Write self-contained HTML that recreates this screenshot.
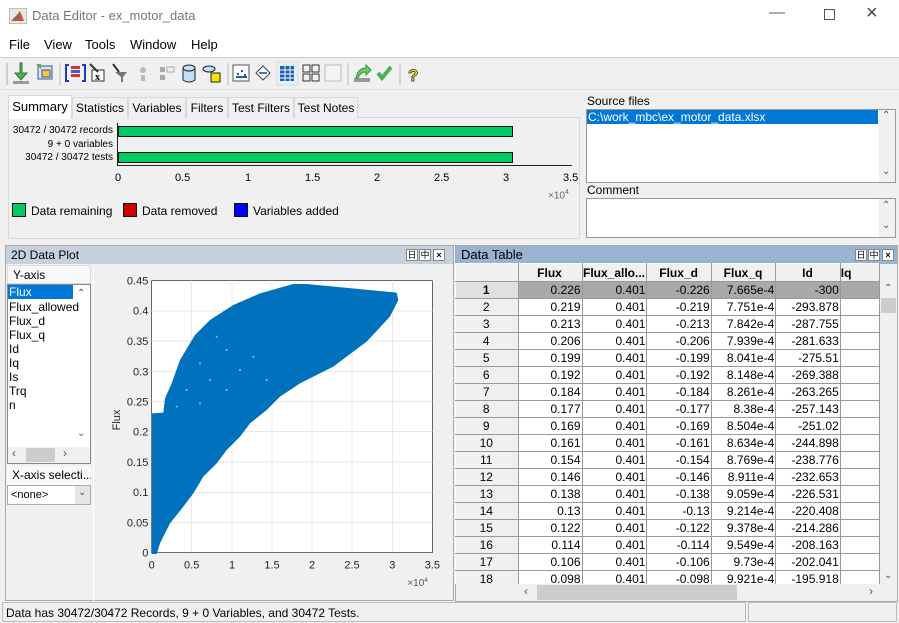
<!DOCTYPE html>
<html><head><meta charset="utf-8"><style>
*{box-sizing:border-box;margin:0;padding:0}
body{width:899px;height:623px;background:#f0f0f0;font-family:"Liberation Sans",Arial,sans-serif;font-size:12px;color:#000;position:relative;overflow:hidden}
.a{position:absolute}
.t{position:absolute;white-space:nowrap}
.tab{position:absolute;top:97px;height:21px;border:1px solid #d9d9d9;border-bottom:none;background:#f0f0f0;padding:3px 0 0;font-size:12px;white-space:nowrap;text-align:center;overflow:hidden}
.hdr{position:absolute;height:18px;font-size:12px;padding:2px 5px}
.btn{position:absolute;top:249px;width:12px;height:12px;border:1px solid #888;background:#fff;font-size:9px;line-height:10px;text-align:center}
table{border-collapse:collapse;position:absolute;left:455px;top:263px;font-size:12px}
td{height:17px;border:1px solid #999;text-align:right;padding:0 1px 0 0;background:#fff;white-space:nowrap;overflow:hidden}
td.r{background:#f0f0f0;text-align:center;border-color:#fff #999 #999 #fff}
tr.h td{background:#f0f0f0;text-align:center;font-weight:bold;height:18px;border-color:#fff #999 #999 #fff}
tr.s td{background:#a9a9a9}
tr.s td.r{background:#e0e0e0}
</style></head><body>
<!-- title bar -->
<div class="a" style="left:0;top:0;width:899px;height:33px;background:#fff"></div>
<svg class="a" style="left:9px;top:8px" width="18" height="16"><rect x="0" y="0" width="18" height="16" fill="#e8e8e8" stroke="#999"/><path d="M2 13 L8 7 L11 3 L15 13 Z" fill="#d9541b"/><path d="M4 11 L9 6 L11 9 Z" fill="#2a7bbf"/></svg>
<div class="t" style="left:32px;top:8px;font-size:13px;color:#777">Data Editor - ex_motor_data</div>
<div class="t" style="left:769px;top:4px;font-size:16px;color:#666">&#8212;</div>
<div class="a" style="left:824px;top:9px;width:11px;height:11px;border:1px solid #555"></div>
<div class="t" style="left:866px;top:2px;font-size:20px;color:#444;font-weight:300">&#215;</div>
<!-- menu -->
<div class="a" style="left:0;top:33px;width:899px;height:24px;background:#fff"></div>
<div class="t" style="left:9px;top:37px;font-size:13px">File</div>
<div class="t" style="left:44px;top:37px;font-size:13px">View</div>
<div class="t" style="left:85px;top:37px;font-size:13px">Tools</div>
<div class="t" style="left:130px;top:37px;font-size:13px">Window</div>
<div class="t" style="left:191px;top:37px;font-size:13px">Help</div>
<div class="a" style="left:0;top:57px;width:899px;height:1px;background:#ccc"></div>
<!-- toolbar -->
<svg class="a" style="left:0;top:58px" width="440" height="32">
<line x1="7" y1="5" x2="7" y2="27" stroke="#aaa"/>
<path d="M20 5 v10 h-5 l6 7 l6 -7 h-5 v-10z" fill="#4caf50" stroke="#2e7d32"/><rect x="13" y="23" width="16" height="3" fill="#999"/>
<rect x="38" y="8" width="14" height="13" fill="#cfe3f7" stroke="#2a5c9a"/><rect x="42" y="12" width="8" height="7" fill="#f4c542" stroke="#555"/><path d="M36 6 l5 0 l0 5z" fill="#4caf50"/>
<line x1="60" y1="5" x2="60" y2="27" stroke="#bbb"/>
<path d="M69 7 h-3 v16 h3 M82 7 h3 v16 h-3" stroke="#1a3fb4" stroke-width="2" fill="none"/><rect x="71" y="8" width="9" height="3" fill="#d33"/><rect x="71" y="12" width="9" height="3" fill="#36c"/><rect x="71" y="16" width="9" height="3" fill="#d33"/>
<rect x="92" y="12" width="12" height="11" fill="#fff" stroke="#333"/><text x="95" y="22" font-size="10" font-weight="bold" font-family="Liberation Serif">x</text><path d="M90 6 l8 8" stroke="#333" stroke-width="2"/>
<path d="M115 14 h12 l-4 5 v5 h-2 v-5z" fill="#777"/><path d="M113 6 l6 8" stroke="#333" stroke-width="2"/>
<circle cx="143" cy="12" r="3" fill="#bbb"/><rect x="141" y="17" width="4" height="6" fill="#bbb"/>
<rect x="160" y="9" width="5" height="5" fill="#aaa"/><rect x="167" y="9" width="7" height="5" fill="none" stroke="#aaa"/><rect x="160" y="17" width="5" height="5" fill="#aaa"/>
<path d="M183 10 v12 q6 4 12 0 v-12" fill="#bfe0f5" stroke="#222"/><ellipse cx="189" cy="10" rx="6" ry="3" fill="#bfe0f5" stroke="#222"/>
<ellipse cx="209" cy="11" rx="6" ry="3" fill="#bfe0f5" stroke="#222"/><rect x="211" y="15" width="9" height="9" fill="#f5e400" stroke="#222"/>
<line x1="228" y1="5" x2="228" y2="27" stroke="#bbb"/>
<rect x="233" y="7" width="16" height="16" fill="#fff" stroke="#555"/><path d="M236 19h11M237 16h2M241 13h2M244 17h2" stroke="#1a5fb4" stroke-width="2"/>
<path d="M256 15 l7 -7 l7 7 l-7 7z" fill="#fff" stroke="#444"/><path d="M259 15h8" stroke="#3a7bd5" stroke-width="2"/>
<rect x="277" y="4" width="21" height="23" fill="#e8f0fb" stroke="#cfd8e6"/><rect x="280" y="8" width="14" height="15" fill="#1a5fb4"/><path d="M280 12h14M280 16h14M280 20h14M285 8v15M290 8v15" stroke="#fff"/>
<rect x="303" y="7" width="7" height="7" fill="none" stroke="#333"/><rect x="312" y="7" width="7" height="7" fill="none" stroke="#333"/><rect x="303" y="16" width="7" height="7" fill="none" stroke="#333"/><rect x="312" y="16" width="7" height="7" fill="none" stroke="#333"/>
<rect x="325" y="7" width="16" height="16" fill="#f4f4f4" stroke="#bbb"/>
<line x1="348" y1="5" x2="348" y2="27" stroke="#bbb"/>
<rect x="354" y="20" width="16" height="4" fill="#999"/><path d="M356 20 q2 -10 10 -10 v-3 l5 5 l-5 5 v-3 q-6 0 -8 6z" fill="#6c6" stroke="#393"/>
<path d="M378 15 l4 5 l9 -11" stroke="#4caf50" stroke-width="4" fill="none"/>
<line x1="400" y1="5" x2="400" y2="27" stroke="#bbb"/>
<text x="408" y="23" font-size="17" font-weight="bold" fill="#f5e400" stroke="#222" stroke-width="0.7">?</text>
</svg>
<div class="a" style="left:0;top:89px;width:899px;height:1px;background:#ddd"></div>
<!-- summary tabs -->
<div class="a" style="left:8px;top:117px;width:572px;height:122px;border:1px solid #d9d9d9;background:#f0f0f0"></div>
<div class="tab" style="left:72px;width:56px">Statistics</div>
<div class="tab" style="left:128px;width:58px">Variables</div>
<div class="tab" style="left:186px;width:42px">Filters</div>
<div class="tab" style="left:228px;width:66px">Test Filters</div>
<div class="tab" style="left:294px;width:64px">Test Notes</div>
<div class="tab" style="left:8px;top:95px;width:64px;height:24px;background:#fff;font-size:13px;padding-top:3px">Summary</div>
<div class="t" style="right:786px;top:125px;font-size:10px">30472 / 30472 records</div>
<div class="t" style="right:786px;top:139px;font-size:10px">9 + 0 variables</div>
<div class="t" style="right:786px;top:152px;font-size:10px">30472 / 30472 tests</div>
<div class="a" style="left:117px;top:123px;width:1px;height:43px;background:#222"></div>
<div class="a" style="left:117px;top:165px;width:455px;height:1px;background:#222"></div>
<div class="a" style="left:118px;top:126px;width:395px;height:11px;background:#00cc66;border:1px solid #111"></div>
<div class="a" style="left:118px;top:152px;width:395px;height:11px;background:#00cc66;border:1px solid #111"></div>
<div class="t" style="left:115px;top:172px;font-size:11px">0</div>
<div class="t" style="left:175px;top:172px;font-size:11px">0.5</div>
<div class="t" style="left:245px;top:172px;font-size:11px">1</div>
<div class="t" style="left:305px;top:172px;font-size:11px">1.5</div>
<div class="t" style="left:374px;top:172px;font-size:11px">2</div>
<div class="t" style="left:434px;top:172px;font-size:11px">2.5</div>
<div class="t" style="left:503px;top:172px;font-size:11px">3</div>
<div class="t" style="left:563px;top:172px;font-size:11px">3.5</div>
<div class="t" style="left:548px;top:189px;font-size:10px;color:#666">×10<sup style="font-size:7px">4</sup></div>
<div class="a" style="left:12px;top:203px;width:14px;height:14px;background:#00cc66;border:1px solid #111"></div>
<div class="t" style="left:31px;top:204px">Data remaining</div>
<div class="a" style="left:123px;top:203px;width:14px;height:14px;background:#cc0000;border:1px solid #111"></div>
<div class="t" style="left:142px;top:204px">Data removed</div>
<div class="a" style="left:234px;top:203px;width:14px;height:14px;background:#0000ff;border:1px solid #111"></div>
<div class="t" style="left:253px;top:204px">Variables added</div>
<!-- source files -->
<div class="t" style="left:587px;top:94px">Source files</div>
<div class="a" style="left:586px;top:109px;width:310px;height:74px;border:1px solid #999;background:#fff"></div>
<div class="a" style="left:587px;top:110px;width:291px;height:14px;background:#0078d7"></div>
<div class="t" style="left:588px;top:110px;color:#fff">C:\work_mbc\ex_motor_data.xlsx</div>
<div class="a" style="left:879px;top:110px;width:16px;height:72px;background:#f0f0f0"></div>
<div class="t" style="left:882px;top:110px;font-size:10px;color:#555">&#8963;</div>
<div class="t" style="left:882px;top:166px;font-size:10px;color:#555">&#8964;</div>
<div class="t" style="left:587px;top:183px">Comment</div>
<div class="a" style="left:586px;top:198px;width:310px;height:40px;border:1px solid #999;background:#fff"></div>
<div class="a" style="left:879px;top:199px;width:16px;height:38px;background:#f0f0f0"></div>
<div class="t" style="left:882px;top:200px;font-size:10px;color:#555">&#8963;</div>
<div class="t" style="left:882px;top:220px;font-size:10px;color:#555">&#8964;</div>
<!-- 2D plot panel -->
<div class="a" style="left:5px;top:245px;width:449px;height:356px;border:1px solid #aaa;background:#f0f0f0"></div>
<div class="hdr" style="left:6px;top:246px;width:447px;background:#c6d1de">2D Data Plot</div>
<div class="btn" style="left:406px">&#26085;</div><div class="btn" style="left:419px">&#20013;</div><div class="btn" style="left:433px;font-weight:bold">&#215;</div>
<div class="a" style="left:93px;top:265px;width:1px;height:336px;background:#fff"></div>
<div class="a" style="left:7px;top:265px;width:84px;height:19px;background:#f8f8f8;border:1px solid #ddd;padding:2px 5px">Y-axis</div>
<div class="a" style="left:7px;top:284px;width:84px;height:180px;border:1px solid #888;background:#fff"></div>
<div class="a" style="left:8px;top:285px;width:65px;height:14px;background:#0078d7"></div>
<div class="t" style="left:9px;top:285px;color:#fff">Flux</div>
<div class="t" style="left:9px;top:300px;line-height:14px">Flux_allowed<br>Flux_d<br>Flux_q<br>Id<br>Iq<br>Is<br>Trq<br>n</div>
<div class="t" style="left:77px;top:288px;font-size:10px;color:#555">&#8963;</div>
<div class="t" style="left:77px;top:428px;font-size:10px;color:#555">&#8964;</div>
<div class="a" style="left:8px;top:447px;width:82px;height:16px;background:#f0f0f0"></div>
<div class="a" style="left:26px;top:448px;width:29px;height:14px;background:#cdcdcd"></div>
<div class="t" style="left:12px;top:446px;color:#555">&#8249;</div><div class="t" style="left:63px;top:446px;color:#555">&#8250;</div>
<div class="a" style="left:7px;top:466px;width:84px;height:19px;background:#f8f8f8;padding:2px 5px;white-space:nowrap;overflow:hidden">X-axis selecti...</div>
<div class="a" style="left:7px;top:485px;width:84px;height:20px;border:1px solid #aaa;background:#fff;padding:3px 3px;font-size:11px">&lt;none&gt;</div>
<div class="a" style="left:75px;top:486px;width:15px;height:18px;background:#e5e5e5"></div>
<div class="t" style="left:78px;top:487px;font-size:10px;color:#555">&#8964;</div>
<!-- plot -->
<svg class="a" style="left:100px;top:270px" width="350" height="320" viewBox="0 0 1050 960">
<rect x="155" y="32" width="842" height="816" fill="#fff" stroke="#222" stroke-width="2"/>
<g stroke="#dcdcdc" stroke-width="2">
<line x1="275" y1="32" x2="275" y2="848"/><line x1="396" y1="32" x2="396" y2="848"/><line x1="516" y1="32" x2="516" y2="848"/><line x1="636" y1="32" x2="636" y2="848"/><line x1="756" y1="32" x2="756" y2="848"/><line x1="877" y1="32" x2="877" y2="848"/>
<line x1="155" y1="123" x2="997" y2="123"/><line x1="155" y1="213" x2="997" y2="213"/><line x1="155" y1="304" x2="997" y2="304"/><line x1="155" y1="395" x2="997" y2="395"/><line x1="155" y1="485" x2="997" y2="485"/><line x1="155" y1="576" x2="997" y2="576"/><line x1="155" y1="667" x2="997" y2="667"/><line x1="155" y1="757" x2="997" y2="757"/>
</g>
<path d="M155 430 L190 428 L195 385 L215 340 L240 270 L285 195 L330 150 L400 105 L480 70 L580 42 L620 42 L890 68 L895 90 L870 140 L800 215 L700 290 L600 340 L540 380 L500 420 L450 460 L420 500 L380 540 L350 580 L310 620 L280 670 L250 710 L210 760 L190 800 L180 820 L170 852 L155 852 Z" fill="#0072bd"/>
<g fill="#fff" opacity="0.55"><circle cx="350" cy="200" r="3"/><circle cx="380" cy="240" r="3"/><circle cx="300" cy="280" r="3"/><circle cx="330" cy="330" r="3"/><circle cx="420" cy="300" r="3"/><circle cx="260" cy="360" r="3"/><circle cx="380" cy="360" r="3"/><circle cx="460" cy="260" r="3"/><circle cx="230" cy="410" r="3"/><circle cx="300" cy="400" r="3"/><circle cx="500" cy="330" r="3"/></g>
<g font-family="Liberation Sans" font-size="33" fill="#262626" text-anchor="end">
<text x="145" y="44">0.45</text><text x="145" y="134">0.4</text><text x="145" y="225">0.35</text><text x="145" y="316">0.3</text><text x="145" y="406">0.25</text><text x="145" y="497">0.2</text><text x="145" y="588">0.15</text><text x="145" y="678">0.1</text><text x="145" y="769">0.05</text><text x="145" y="860">0</text>
</g>
<g font-family="Liberation Sans" font-size="33" fill="#262626" text-anchor="middle">
<text x="155" y="895">0</text><text x="275" y="895">0.5</text><text x="396" y="895">1</text><text x="516" y="895">1.5</text><text x="636" y="895">2</text><text x="756" y="895">2.5</text><text x="877" y="895">3</text><text x="997" y="895">3.5</text>
</g>
<text x="60" y="450" font-family="Liberation Sans" font-size="33" fill="#262626" transform="rotate(-90 60 450)" text-anchor="middle">Flux</text>
<text x="922" y="948" font-family="Liberation Sans" font-size="30" fill="#555">×10<tspan font-size="20" dy="-12">4</tspan></text>
</svg>
<!-- data table panel -->
<div class="a" style="left:455px;top:245px;width:443px;height:357px;border:1px solid #aaa;background:#f0f0f0"></div>
<div class="hdr" style="left:456px;top:246px;width:441px;background:#99b4d1;font-size:13px;padding-top:1px">Data Table</div>
<div class="btn" style="left:855px">&#26085;</div><div class="btn" style="left:868px">&#20013;</div><div class="btn" style="left:882px;font-weight:bold">&#215;</div>
<div class="a" style="left:455px;top:263px;width:425px;height:321px;overflow:hidden">
<table style="left:0;top:0">
<colgroup><col style="width:64px"><col style="width:65px"><col style="width:65px"><col style="width:65px"><col style="width:65px"><col style="width:65px"><col style="width:40px"></colgroup>
<tr class="h"><td></td><td>Flux</td><td>Flux_allo...</td><td>Flux_d</td><td>Flux_q</td><td>Id</td><td style="text-align:left">Iq</td></tr>
<tr class="s"><td class="r"><b>1</b></td><td>0.226</td><td>0.401</td><td>-0.226</td><td>7.665e-4</td><td>-300</td><td></td></tr>
<tr><td class="r">2</td><td>0.219</td><td>0.401</td><td>-0.219</td><td>7.751e-4</td><td>-293.878</td><td></td></tr>
<tr><td class="r">3</td><td>0.213</td><td>0.401</td><td>-0.213</td><td>7.842e-4</td><td>-287.755</td><td></td></tr>
<tr><td class="r">4</td><td>0.206</td><td>0.401</td><td>-0.206</td><td>7.939e-4</td><td>-281.633</td><td></td></tr>
<tr><td class="r">5</td><td>0.199</td><td>0.401</td><td>-0.199</td><td>8.041e-4</td><td>-275.51</td><td></td></tr>
<tr><td class="r">6</td><td>0.192</td><td>0.401</td><td>-0.192</td><td>8.148e-4</td><td>-269.388</td><td></td></tr>
<tr><td class="r">7</td><td>0.184</td><td>0.401</td><td>-0.184</td><td>8.261e-4</td><td>-263.265</td><td></td></tr>
<tr><td class="r">8</td><td>0.177</td><td>0.401</td><td>-0.177</td><td>8.38e-4</td><td>-257.143</td><td></td></tr>
<tr><td class="r">9</td><td>0.169</td><td>0.401</td><td>-0.169</td><td>8.504e-4</td><td>-251.02</td><td></td></tr>
<tr><td class="r">10</td><td>0.161</td><td>0.401</td><td>-0.161</td><td>8.634e-4</td><td>-244.898</td><td></td></tr>
<tr><td class="r">11</td><td>0.154</td><td>0.401</td><td>-0.154</td><td>8.769e-4</td><td>-238.776</td><td></td></tr>
<tr><td class="r">12</td><td>0.146</td><td>0.401</td><td>-0.146</td><td>8.911e-4</td><td>-232.653</td><td></td></tr>
<tr><td class="r">13</td><td>0.138</td><td>0.401</td><td>-0.138</td><td>9.059e-4</td><td>-226.531</td><td></td></tr>
<tr><td class="r">14</td><td>0.13</td><td>0.401</td><td>-0.13</td><td>9.214e-4</td><td>-220.408</td><td></td></tr>
<tr><td class="r">15</td><td>0.122</td><td>0.401</td><td>-0.122</td><td>9.378e-4</td><td>-214.286</td><td></td></tr>
<tr><td class="r">16</td><td>0.114</td><td>0.401</td><td>-0.114</td><td>9.549e-4</td><td>-208.163</td><td></td></tr>
<tr><td class="r">17</td><td>0.106</td><td>0.401</td><td>-0.106</td><td>9.73e-4</td><td>-202.041</td><td></td></tr>
<tr><td class="r">18</td><td>0.098</td><td>0.401</td><td>-0.098</td><td>9.921e-4</td><td>-195.918</td><td></td></tr>
</table></div>
<div class="a" style="left:880px;top:282px;width:17px;height:302px;background:#f0f0f0"></div>
<div class="a" style="left:881px;top:298px;width:15px;height:15px;background:#cdcdcd"></div>
<div class="t" style="left:884px;top:283px;font-size:10px;color:#555">&#8963;</div>
<div class="t" style="left:884px;top:570px;font-size:10px;color:#555">&#8964;</div>
<div class="a" style="left:456px;top:584px;width:424px;height:17px;background:#f0f0f0"></div>
<div class="a" style="left:537px;top:585px;width:200px;height:15px;background:#cdcdcd"></div>
<div class="t" style="left:524px;top:584px;color:#555">&#8249;</div><div class="t" style="left:869px;top:584px;color:#555">&#8250;</div>
<!-- status -->
<div class="a" style="left:2px;top:602px;width:744px;height:20px;border:1px solid #bbb;background:#f0f0f0"></div>
<div class="t" style="left:6px;top:606px">Data has 30472/30472 Records, 9 + 0 Variables, and 30472 Tests.</div>
<div class="a" style="left:748px;top:602px;width:149px;height:20px;border:1px solid #bbb;background:#f0f0f0"></div>
</body></html>
